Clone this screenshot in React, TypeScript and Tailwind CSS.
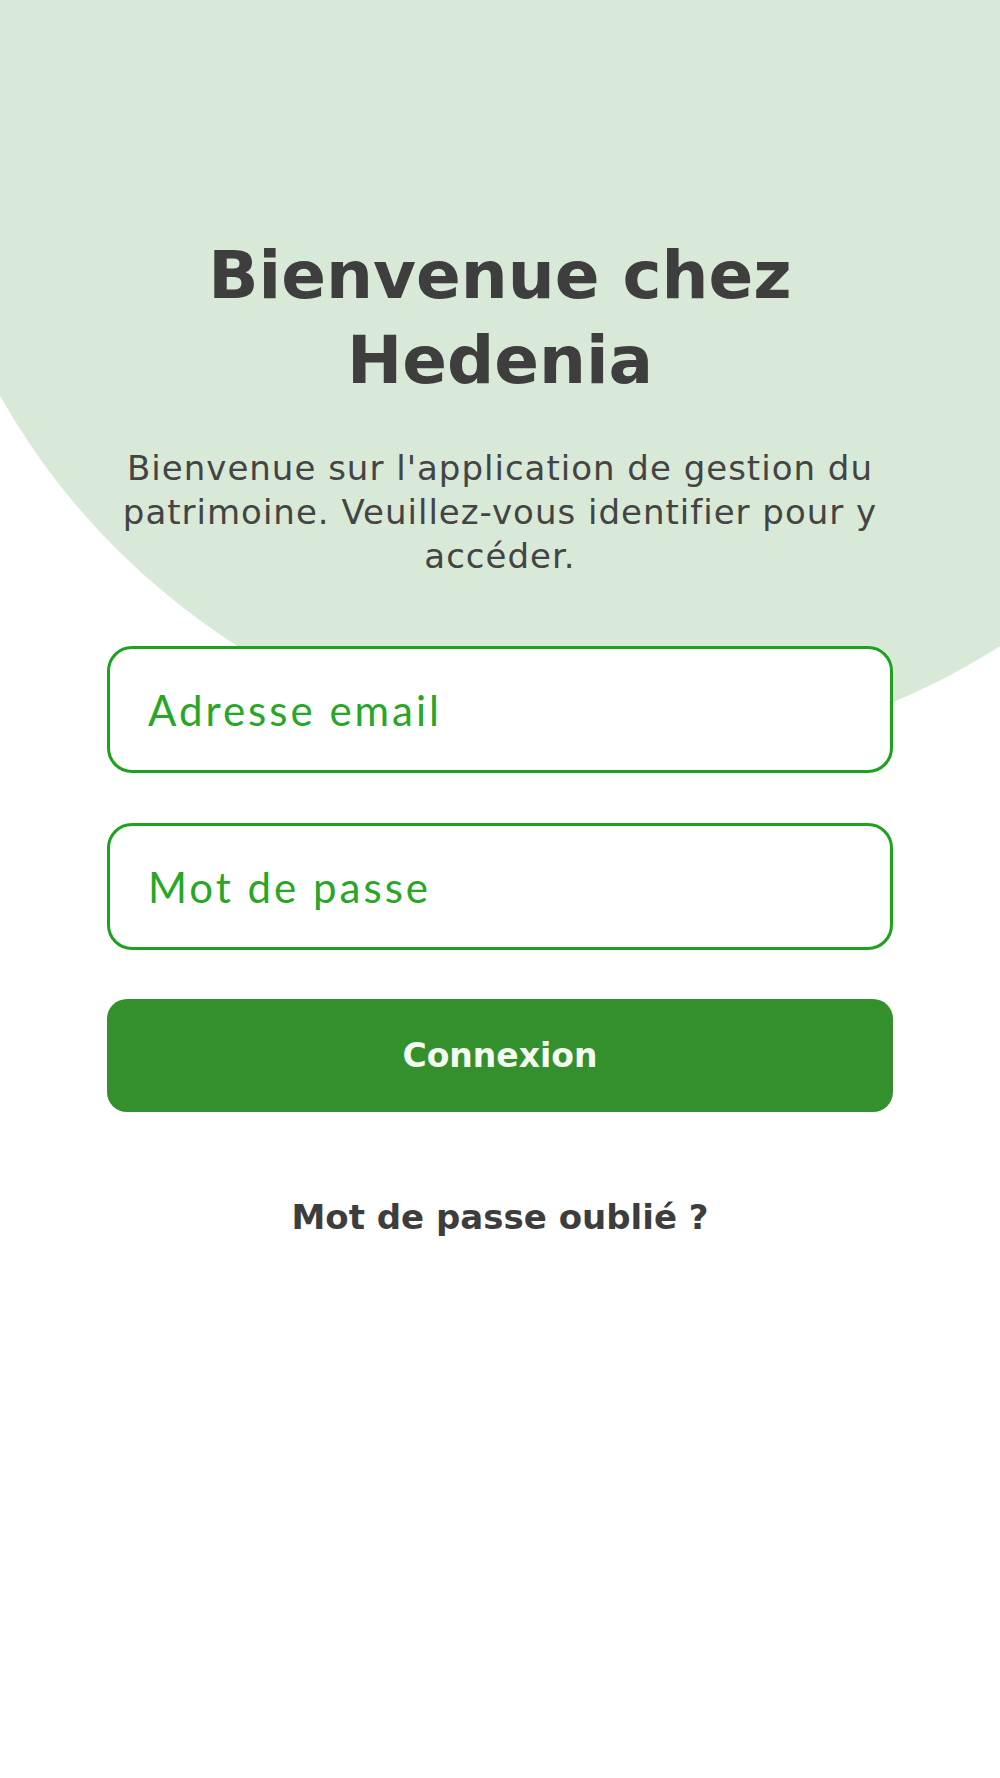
import React, { useState } from 'react';

const App = () => {
  const [email, setEmail] = useState('');
  const [password, setPassword] = useState('');

  return (
    <div className="relative min-h-screen w-full overflow-hidden bg-white">
      {/* Background circle */}
      <div className="absolute left-[-92px] top-[-665px] h-[1422px] w-[1422px] rounded-full bg-[#d8e9d8]" />

      <section className="relative flex flex-col px-[107px] pt-[233px]">
        {/* Header */}
        <h1 className="text-center font-['DejaVu_Sans',sans-serif] text-[66px] font-bold leading-[85px] text-[#3e3e3e]">
          Bienvenue chez
          <br />
          Hedenia
        </h1>
        <p className="mt-[43px] text-center font-['DejaVu_Sans',sans-serif] text-[34px] leading-[44px] tracking-[1px] text-[#444444]">
          Bienvenue sur l'application de gestion du patrimoine. Veuillez-vous identifier pour y accéder.
        </p>

        {/* Inputs */}
        <div className="mt-[68px] flex flex-col gap-[50px]">
          <input
            type="email"
            value={email}
            onChange={(e) => setEmail(e.target.value)}
            placeholder="Adresse email"
            className="h-[127px] w-full rounded-[25px] border-[3px] border-[#1ca21c] bg-white px-[38px] font-['Lato',sans-serif] text-[42px] tracking-[3px] text-[#2a2a2a] outline-none placeholder:text-[#27a627]"
          />
          <input
            type="password"
            value={password}
            onChange={(e) => setPassword(e.target.value)}
            placeholder="Mot de passe"
            className="h-[127px] w-full rounded-[25px] border-[3px] border-[#1ca21c] bg-white px-[38px] font-['Lato',sans-serif] text-[42px] tracking-[3px] text-[#2a2a2a] outline-none placeholder:text-[#27a627]"
          />
        </div>

        {/* Button */}
        <button
          type="button"
          className="mt-[49px] flex h-[113px] w-full items-center justify-center rounded-[20px] bg-[#33902c] font-['DejaVu_Sans',sans-serif] text-[33px] font-bold text-[#f4fbf1]"
        >
          Connexion
        </button>

        <a
          href="#"
          className="mt-[85px] self-center font-['DejaVu_Sans',sans-serif] text-[34px] font-bold leading-[40px] text-[#3d3d3d]"
        >
          Mot de passe oublié ?
        </a>
      </section>
    </div>
  );
};

export default App;
